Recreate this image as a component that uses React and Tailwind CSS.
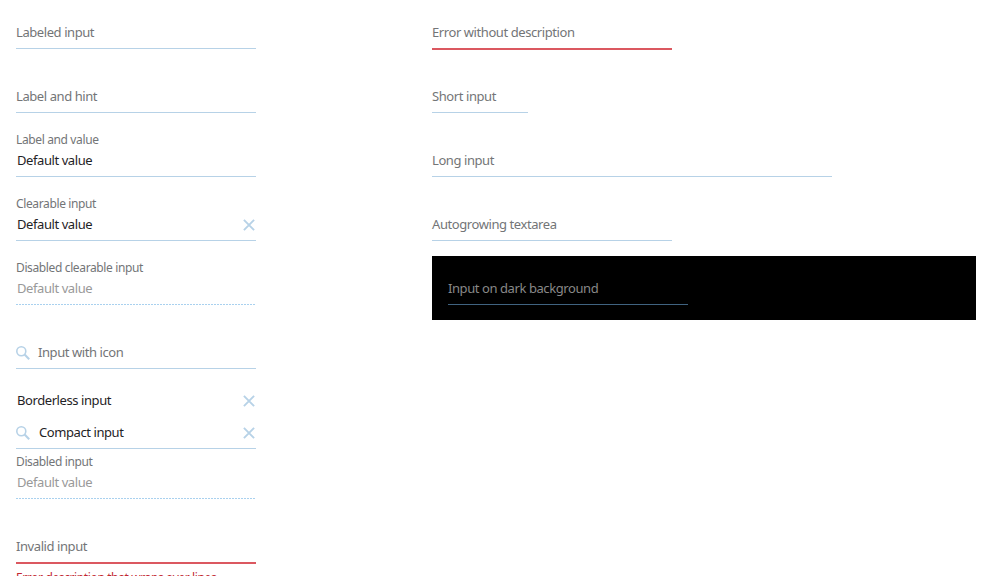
import React from 'react';

const lines = {
  normal: 'border-b border-[#b7d2e7]',
  disabled: 'border-b border-transparent bg-[repeating-linear-gradient(90deg,#a9d1ef_0px,#a9d1ef_2px,#ffffff_2px,#ffffff_3px)] bg-[length:100%_1px] bg-bottom bg-no-repeat [background-clip:border-box] [background-origin:border-box]',
  error: 'border-b-2 border-[#db5860]',
  dark: 'border-b border-[#406380]',
  none: 'border-b border-transparent',
};

function SearchIcon() {
  return (
    <svg className="mr-2 mt-px h-3.5 w-3.5 shrink-0" viewBox="0 0 14 14" fill="none" stroke="#b7d2e7">
      <circle cx="5.3" cy="5.3" r="4.5" strokeWidth="1.6" />
      <path d="M8.6 8.6L13.2 13.2" strokeWidth="2.1" />
    </svg>
  );
}

function ClearIcon() {
  return (
    <svg className="ml-auto mr-px mt-px h-3 w-3 shrink-0" viewBox="0 0 12 12" fill="none" stroke="#b7d2e7" strokeWidth="1.9">
      <path d="M0.9 0.9L11.1 11.1M11.1 0.9L0.9 11.1" />
    </svg>
  );
}

function Field({ label, value, placeholder, line = 'normal', height = 'h-16', width = 'w-60', pad = 'pb-1.5', icon, clear, tone = 'text-[#1f2326]', hint = 'text-[#737577]' }) {
  return (
    <div className={`flex flex-col justify-end ${height} ${width} ${pad} ${lines[line]}`}>
      {label && <div className="mb-0.5 h-4 whitespace-nowrap text-[12px] leading-4 tracking-[-0.37px] text-[#737577]">{label}</div>}
      <div className="flex h-5 items-center whitespace-nowrap text-[13px] leading-5 tracking-[-0.42px]">
        {icon && <SearchIcon />}
        {value ? <span className={`pl-px ${tone}`}>{value}</span> : <span className={hint}>{placeholder}</span>}
        {clear && <ClearIcon />}
      </div>
    </div>
  );
}

export default function App() {
  return (
    <div className="h-[578px] overflow-hidden bg-white font-['Noto_Sans','Open_Sans',sans-serif]">
      <div className="flex h-[576px] overflow-hidden px-4">
        <div className="w-[416px] shrink-0">
          <Field placeholder="Labeled input" height="h-[49px]" />
          <Field placeholder="Label and hint" />
          <Field label="Label and value" value="Default value" />
          <Field label="Clearable input" value="Default value" clear />
          <Field label="Disabled clearable input" value="Default value" line="disabled" tone="text-[#999999]" />
          <Field placeholder="Input with icon" icon />
          <Field value="Borderless input" height="h-12" line="none" clear />
          <Field value="Compact input" height="h-8" icon clear />
          <Field label="Disabled input" value="Default value" height="h-[50px]" line="disabled" tone="text-[#999999]" />
          <Field placeholder="Invalid input" height="h-[65px]" line="error" />
          <div className="whitespace-nowrap pt-[5px] text-[12px] leading-[18px] tracking-[-0.38px] text-[#c22731]">Error description that wraps over lines</div>
        </div>
        <div className="w-[544px] shrink-0">
          <Field placeholder="Error without description" height="h-[50px]" line="error" />
          <Field placeholder="Short input" height="h-[63px]" width="w-24" />
          <Field placeholder="Long input" width="w-[400px]" />
          <Field placeholder="Autogrowing textarea" />
          <div className="mt-[15px] h-16 bg-black px-4">
            <Field placeholder="Input on dark background" height="h-[49px]" line="dark" hint="text-[#888888]" />
          </div>
        </div>
      </div>
    </div>
  );
}
